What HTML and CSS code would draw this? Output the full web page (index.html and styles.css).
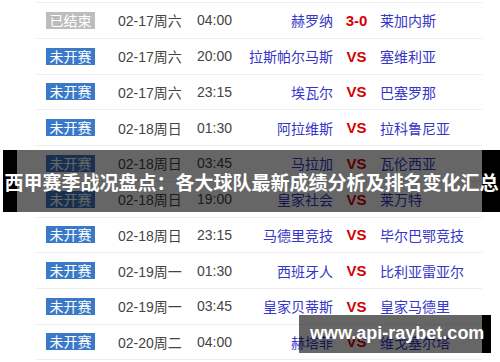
FILE: index.html
```html
<!DOCTYPE html>
<html lang="zh">
<head>
<meta charset="utf-8">
<title>西甲赛程</title>
<link rel="stylesheet" href="styles.css">
</head>
<body>
<div class="page">
  <div class="table">
    <div class="row"><span class="badge done">已结束</span><span class="date">02-17周六</span><span class="time">04:00</span><span class="home">赫罗纳</span><span class="vs">3-0</span><span class="away">莱加内斯</span></div>
    <div class="row"><span class="badge">未开赛</span><span class="date">02-17周六</span><span class="time">20:00</span><span class="home">拉斯帕尔马斯</span><span class="vs">VS</span><span class="away">塞维利亚</span></div>
    <div class="row"><span class="badge">未开赛</span><span class="date">02-17周六</span><span class="time">23:15</span><span class="home">埃瓦尔</span><span class="vs">VS</span><span class="away">巴塞罗那</span></div>
    <div class="row"><span class="badge">未开赛</span><span class="date">02-18周日</span><span class="time">01:30</span><span class="home">阿拉维斯</span><span class="vs">VS</span><span class="away">拉科鲁尼亚</span></div>
    <div class="row"><span class="badge">未开赛</span><span class="date">02-18周日</span><span class="time">03:45</span><span class="home">马拉加</span><span class="vs">VS</span><span class="away">瓦伦西亚</span></div>
    <div class="row"><span class="badge">未开赛</span><span class="date">02-18周日</span><span class="time">19:00</span><span class="home">皇家社会</span><span class="vs">VS</span><span class="away">莱万特</span></div>
    <div class="row"><span class="badge">未开赛</span><span class="date">02-18周日</span><span class="time">23:15</span><span class="home">马德里竞技</span><span class="vs">VS</span><span class="away">毕尔巴鄂竞技</span></div>
    <div class="row"><span class="badge">未开赛</span><span class="date">02-19周一</span><span class="time">01:30</span><span class="home">西班牙人</span><span class="vs">VS</span><span class="away">比利亚雷亚尔</span></div>
    <div class="row"><span class="badge">未开赛</span><span class="date">02-19周一</span><span class="time">03:45</span><span class="home">皇家贝蒂斯</span><span class="vs">VS</span><span class="away">皇家马德里</span></div>
    <div class="row last"><span class="badge">未开赛</span><span class="date">02-20周二</span><span class="time">04:00</span><span class="home">赫塔菲</span><span class="vs">VS</span><span class="away">维戈塞尔塔</span></div>
  </div>
  <div class="caption">西甲赛季战况盘点：各大球队最新成绩分析及排名变化汇总</div>
  <div class="watermark">www.api-raybet.com</div>
</div>
</body>
</html>
```

FILE: styles.css
```css
html, body {
  margin: 0;
  padding: 0;
  background: #fff;
}
body {
  font-family: "Liberation Sans", "Noto Sans CJK SC", sans-serif;
  width: 500px;
  height: 362px;
  overflow: hidden;
}
.page {
  position: relative;
  width: 500px;
  height: 362px;
}
.table {
  margin-left: 36px;
  width: 446px;
  padding-top: 2px;
}
.row {
  display: grid;
  grid-template-columns: 72px 79px 50px 86px 47px 1fr;
  align-items: center;
  height: 35.75px;
  box-sizing: border-box;
  padding-left: 10px;
  border-top: 1px solid #eeeeee;
  font-size: 14px;
  color: #444;
}
.row.last {
  border-bottom: 1px solid #eeeeee;
}
.badge {
  display: inline-block;
  width: 49px;
  height: 17px;
  line-height: 17px;
  text-align: center;
  background: #3a78c8;
  color: #fff;
  font-size: 14px;
  font-family: "Noto Sans CJK SC", sans-serif;
}
.badge.done {
  background: #bdbdbd;
}
.date, .time {
  color: #444;
}
.home {
  text-align: right;
  color: #3636c8;
  white-space: nowrap;
}
.away {
  color: #3636c8;
  white-space: nowrap;
}
.vs {
  text-align: center;
  color: #d40000;
  font-weight: bold;
  font-size: 15px;
}
.caption {
  position: absolute;
  left: 3px;
  top: 150px;
  width: 497px;
  height: 62px;
  line-height: 64px;
  text-align: center;
  white-space: nowrap;
  background: linear-gradient(to right, #000 0, #000 14px, rgba(0,0,0,0.6) 14px, rgba(0,0,0,0.6) 479px, #000 479px);
  color: #fff;
  font-weight: bold;
  font-size: 19px;
  font-family: "Noto Sans CJK SC", sans-serif;
}
.watermark {
  position: absolute;
  left: 299px;
  top: 315px;
  width: 192px;
  height: 38px;
  line-height: 36px;
  box-sizing: border-box;
  padding-left: 11px;
  white-space: nowrap;
  background: linear-gradient(to right, rgba(0,0,0,0.6) 0, rgba(0,0,0,0.6) 183px, #000 183px);
  color: #fff;
  font-weight: bold;
  font-size: 18px;
  font-family: "Liberation Sans", sans-serif;
}
```
